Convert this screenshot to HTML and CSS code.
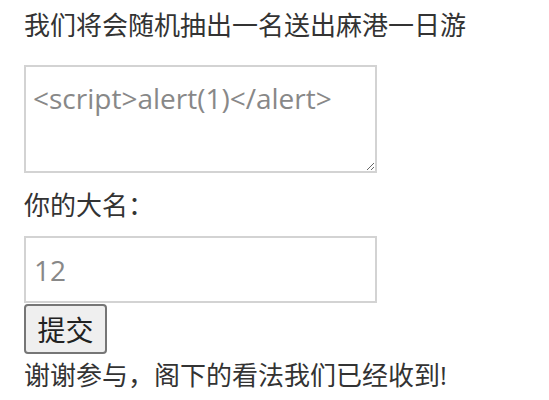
FILE: index.html
```html
<!DOCTYPE html>
<html lang="zh">
<head>
<meta charset="utf-8">
<link rel="stylesheet" href="styles.css">
</head>
<body>
<form class="form">
  <div class="title">我们将会随机抽出一名送出麻港一日游</div>
  <textarea class="comment" placeholder="<script>alert(1)</alert>"></textarea>
  <div class="label">你的大名：</div>
  <input class="name" type="text" placeholder="12">
  <button class="submit" type="button">提交</button>
  <div class="thanks">谢谢参与，阁下的看法我们已经收到!</div>
</form>
</body>
</html>
```
FILE: styles.css
```css
html, body {
  margin: 0;
  padding: 0;
  background: #fff;
}
body {
  font-family: "Open Sans", "Noto Sans CJK SC", sans-serif;
  font-size: 26px;
  color: #333;
}
.form {
  display: flex;
  flex-direction: column;
  align-items: flex-start;
  padding: 7px 24px 0 24px;
}
.title {
  line-height: 36px;
}
.comment {
  margin-top: 22px;
  width: 353px;
  height: 108px;
  box-sizing: border-box;
  border: 2px solid #d3d3d3;
  padding: 12px 7px 6px 7px;
  font-family: inherit;
  font-size: 28px;
  line-height: 38px;
  color: #333;
  resize: both;
  outline: none;
}
.comment::placeholder, .name::placeholder {
  color: #888;
}
.label {
  margin-top: 14px;
  line-height: 36px;
}
.name {
  margin-top: 13px;
  width: 353px;
  height: 67px;
  box-sizing: border-box;
  border: 2px solid #d3d3d3;
  padding: 0 8px;
  font-family: inherit;
  font-size: 28px;
  line-height: 38px;
  color: #333;
  outline: none;
}
.submit {
  margin-top: 1px;
  width: 83px;
  height: 50px;
  box-sizing: border-box;
  border: 2px solid #767676;
  border-radius: 4px;
  background: #efefef;
  font-family: inherit;
  font-size: 28px;
  color: #222;
  padding: 0;
}
.thanks {
  margin-top: 3px;
  line-height: 36px;
}
```
